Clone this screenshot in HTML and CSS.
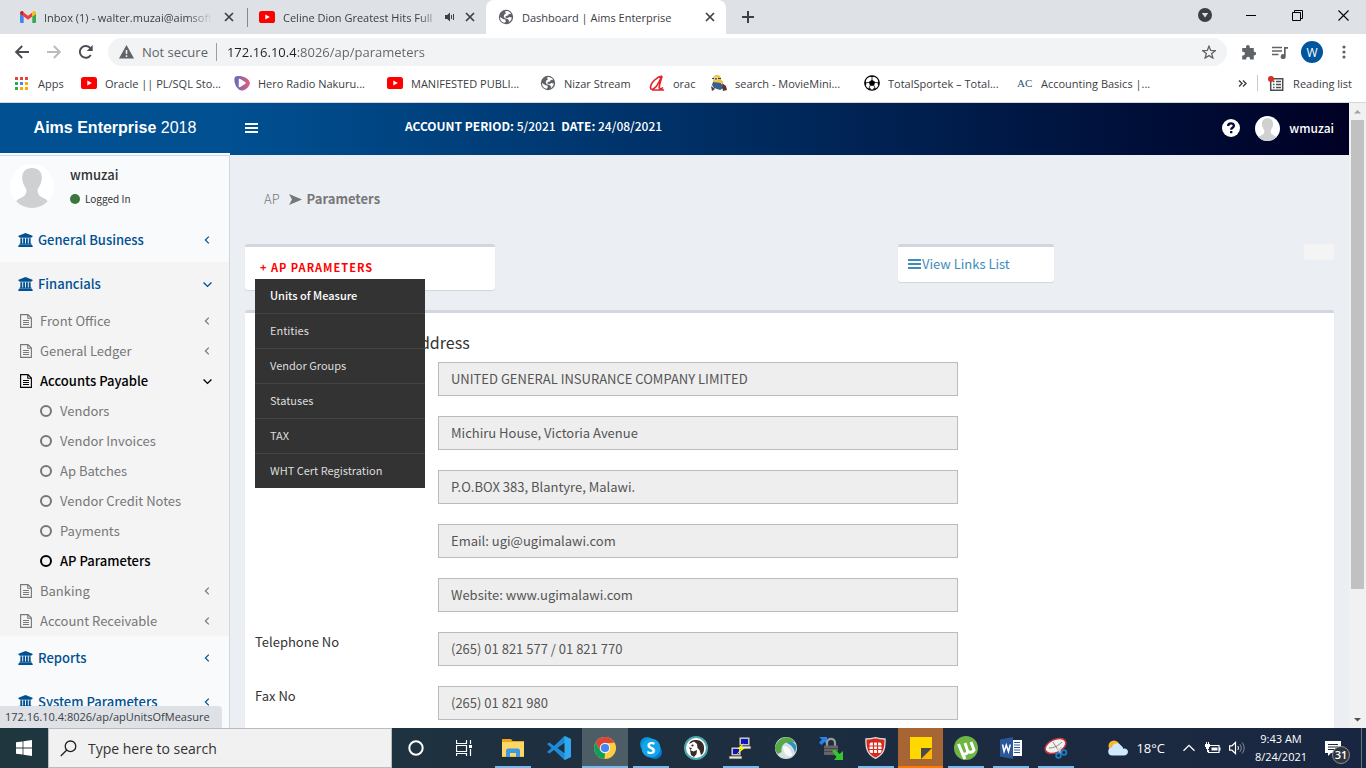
FILE: index.html
```html
<!DOCTYPE html>
<html lang="en">
<head>
    <meta charset="UTF-8">
    <meta name="viewport" content="width=device-width, initial-scale=1.0">
    <title>Dashboard | Aims Enterprise</title>
    <link rel="stylesheet" href="styles.css">
</head>
<body>
    <!-- shared icons -->
    <svg class="sprite" aria-hidden="true">
        <symbol id="i-close" viewBox="0 0 10 10"><path d="M1 1l8 8M9 1L1 9" stroke="#3c4043" stroke-width="1.7" fill="none"/></symbol>
        <symbol id="i-youtube" viewBox="0 0 16 12"><rect width="16" height="12" rx="2.6" fill="#f00"/><path d="M6.3 3.4v5.2L10.8 6z" fill="#fff"/></symbol>
        <symbol id="i-globe" viewBox="0 0 16 16"><circle cx="8" cy="8" r="7.2" fill="#5f6368"/><path d="M2 8l3.500 2.200 1.800.3.500 1.700-1 1.600C4 13.500 2 11.200 2 8zM7.500 2c2.300-.2 4.500.8 5.700 2.800l-2.400.2-.8 1.500-2.300.6-.2 1.700 2.500.3 1.200-1 2.600.5c-.2 2-1.300 3.700-3 4.600l.2-2-1.800-1.500-2.500-.4-1-2 .8-2 1.500-.8-.8-1.300z" fill="#fff"/></symbol>
        <symbol id="i-bank" viewBox="0 0 16 15"><path d="M8 0l7.500 3v1.200h-1V5h-13v-.8h-1V3zM2.500 5.600h2v5.600h1V5.600h2v5.600h1V5.600h2v5.600h1V5.600h2v5.600h.8v1H1.700v-1h.8zM1 12.600h14v.8h.700V15H.3v-1.600H1z" fill="currentColor"/></symbol>
        <symbol id="i-file" viewBox="0 0 12 14"><path d="M.6.6h7.400l3.400 3.400v9.400H.6zM7.800.6v3.600h3.600M3 6.500h6M3 8.500h6M3 10.500h6" fill="none" stroke="currentColor" stroke-width="1.100"/></symbol>
        <symbol id="i-left" viewBox="0 0 6 8"><path d="M4.800.6L1.400 4l3.400 3.400" fill="none" stroke="currentColor" stroke-width="1.200"/></symbol>
        <symbol id="i-down" viewBox="0 0 8 6"><path d="M.5 1.200L4 4.700l3.500-3.500" fill="none" stroke="currentColor" stroke-width="1.200"/></symbol>
        <symbol id="i-bars" viewBox="0 0 13 10"><path d="M0 1h13M0 5h13M0 9h13" stroke="currentColor" stroke-width="2"/></symbol>
        <symbol id="i-person" viewBox="0 0 44 44"><circle cx="22" cy="22" r="22" fill="#fff"/><path d="M22 4c-6 0-9.800 3.600-9.800 9.500 0 4 1.200 7.500 3.300 10.200.8 1 1 2 .9 3.400-.2 2.400-.8 4-3 5.400-3 1.700-5.400 2.400-7.200 4.700A22 22 0 0 0 22 44a22 22 0 0 0 15.800-6.800c-1.800-2.300-4.200-3-7.200-4.700-2.200-1.400-2.800-3-3-5.400-.1-1.400.1-2.400.9-3.400 2.100-2.700 3.300-6.200 3.300-10.200C31.800 7.600 28 4 22 4z" fill="#cfd0d2"/></symbol>
    </svg>

    <!-- browser tabs -->
    <div class="tab-strip">
        <div class="tab">
            <svg class="fav" viewBox="0 0 16 12"><path d="M1 12h2.700V5.500L0 2.700V11a1 1 0 0 0 1 1z" fill="#4285f4"/><path d="M12.300 12H15a1 1 0 0 0 1-1V2.700l-3.700 2.800z" fill="#34a853"/><path d="M3.700 1.400v4.100L8 8.700l4.300-3.200V1.400L8 4.700z" fill="#ea4335"/><path d="M12.300 1.400v4.100L16 2.700V2c0-1.700-1.900-2.600-3.200-1.600z" fill="#fbbc04"/><path d="M0 2.700l3.700 2.800V1.400L3.200.4C1.900-.6 0 .3 0 2z" fill="#c5221f"/></svg>
            <span class="tab-title">Inbox (1) - walter.muzai@aimsoft</span>
            <button class="tab-close" aria-label="Close tab"><svg width="10" height="10"><use href="#i-close"/></svg></button>
        </div>
        <div class="tab tab-split">
            <svg class="fav"><use href="#i-youtube"/></svg>
            <span class="tab-title">Celine Dion Greatest Hits Full</span>
            <svg width="11" height="10" viewBox="0 0 11 10"><path d="M0 3h2.200L5 .5v9L2.200 7H0z" fill="#3c4043"/><path d="M6.500 3v4M8.500 2v6" stroke="#3c4043"/></svg>
            <button class="tab-close" aria-label="Close tab"><svg width="10" height="10"><use href="#i-close"/></svg></button>
        </div>
        <div class="tab active">
            <svg class="fav"><use href="#i-globe"/></svg>
            <span class="tab-title">Dashboard | Aims Enterprise</span>
            <button class="tab-close" aria-label="Close tab"><svg width="10" height="10"><use href="#i-close"/></svg></button>
        </div>
        <button class="new-tab" aria-label="New tab"><svg width="12" height="12" viewBox="0 0 12 12"><path d="M6 0v12M0 6h12" stroke="#3c4043" stroke-width="2"/></svg></button>
        <div class="window-buttons">
            <button aria-label="Search tabs"><svg width="14" height="14" viewBox="0 0 14 14"><circle cx="7" cy="7" r="7" fill="#3c4043"/><path d="M3.800 5h6.400L7 9.500z" fill="#dee1e6"/></svg></button>
            <button aria-label="Minimize"><svg width="10" height="11"><path d="M0 5.500h10" stroke="#000"/></svg></button>
            <button aria-label="Restore"><svg width="11" height="11"><path d="M.5 2.500h8v8h-8zM2.500 2.500v-2h8v8h-2" fill="none" stroke="#000"/></svg></button>
            <button aria-label="Close"><svg width="11" height="11"><path d="M.5.5l10 10M10.500.5l-10 10" stroke="#000" stroke-width="1.100"/></svg></button>
        </div>
    </div>

    <div class="toolbar">
        <button aria-label="Back"><svg width="14" height="14" viewBox="0 0 14 14"><path d="M14 7H1.500M7.200 1L1.200 7l6 6" fill="none" stroke="#4a4d51" stroke-width="1.900"/></svg></button>
        <button aria-label="Forward"><svg width="14" height="14" viewBox="0 0 14 14"><path d="M0 7h12.500M6.800 1l6 6-6 6" fill="none" stroke="#b9bbbe" stroke-width="1.900"/></svg></button>
        <button aria-label="Reload"><svg width="14" height="14" viewBox="0 0 14 14"><path d="M11.800 10A5.900 5.900 0 1 1 11.400 3.200" fill="none" stroke="#4a4d51" stroke-width="1.900"/><path d="M13.700 0v6H7.700z" fill="#4a4d51"/></svg></button>
        <div class="omnibox">
            <svg width="15" height="14" viewBox="0 0 15 14"><path d="M7.500 0L15 13.500H0z" fill="#5f6368"/><path d="M7.500 5v4M7.500 10.300v1.600" stroke="#f1f3f4" stroke-width="1.600"/></svg>
            <span class="not-secure">Not secure</span>
            <input class="url" type="text" aria-label="Address" value="172.16.10.4:8026/ap/parameters">
            <button aria-label="Bookmark this page"><svg width="14" height="14" viewBox="0 0 14 14"><path d="M7 1.200l1.700 4.200 4.500.3-3.500 2.900 1.200 4.400L7 10.600 3.100 13l1.200-4.400L.8 5.700l4.500-.3z" fill="none" stroke="#5f6368" stroke-width="1.300"/></svg></button>
        </div>
        <div class="toolbar-right">
            <button aria-label="Extensions"><svg width="15" height="15" viewBox="0 0 15 15"><path d="M5 3V2a1.900 1.900 0 0 1 3.800 0v1h4v3.700h.4a1.900 1.900 0 0 1 0 3.800h-.4v4H9v-.8a1.900 1.900 0 0 0-3.800 0v.8H1.200v-4H2a1.900 1.900 0 0 0 0-3.800h-.8V3z" fill="#5f6368"/></svg></button>
            <button aria-label="Media"><svg width="16" height="13" viewBox="0 0 16 13"><path d="M0 1.500h10M0 5h10M0 8.500h6.500" stroke="#5f6368" stroke-width="1.700"/><path d="M12 1h4v1.800h-2.300V10.500a2.500 2.500 0 1 1-1.700-2.300z" fill="#5f6368"/></svg></button>
            <button class="profile">W</button>
            <button aria-label="Menu"><svg width="4" height="14" viewBox="0 0 4 14"><g fill="#5f6368"><circle cx="2" cy="2" r="1.600"/><circle cx="2" cy="7" r="1.600"/><circle cx="2" cy="12" r="1.600"/></g></svg></button>
        </div>
    </div>

    <nav class="bookmarks">
        <a class="bm-apps" href="#"><svg width="13" height="13" viewBox="0 0 13 13"><path d="M0 0h3v3H0zM5 0h3v3H5zM10 0h3v3h-3z" fill="#ea4335"/><path d="M0 5h3v3H0zM0 10h3v3H0z" fill="#34a853"/><path d="M5 5h3v3H5z" fill="#4285f4"/><path d="M10 5h3v3h-3zM10 10h3v3h-3zM5 10h3v3H5z" fill="#fbaa04"/></svg>Apps</a>
        <a class="bm-wide" href="#"><svg class="fav"><use href="#i-youtube"/></svg>Oracle || PL/SQL Sto...</a>
        <a class="bm-wide" href="#"><svg class="fav" viewBox="0 0 16 16"><defs><linearGradient id="hero"><stop offset="0" stop-color="#5b6fc0"/><stop offset="1" stop-color="#e85a7c"/></linearGradient></defs><path d="M1 2c3-2.500 14 0 15 6-1 5-6 8-9 7.500C2 14.500-1 5 1 2z" fill="url(#hero)"/><path d="M5.500 4.500v7l5.500-3.500z" fill="#fff" stroke="#fff" stroke-width="1.500" stroke-linejoin="round"/></svg>Hero Radio Nakuru...</a>
        <a class="bm-wide" href="#"><svg class="fav"><use href="#i-youtube"/></svg>MANIFESTED PUBLI...</a>
        <a class="bm-globe" href="#"><svg class="fav"><use href="#i-globe"/></svg>Nizar Stream</a>
        <a class="bm-orac" href="#"><svg class="fav" viewBox="0 0 16 16"><path d="M13 1C8 1.500 1.500 8 1.500 12.500c0 4 5.500 1 8.500-5.500L13 1l-2.500 9c-1 4 1 5 3.500 2.500M3 15h12" fill="none" stroke="#e3262d" stroke-width="1.700"/></svg>orac</a>
        <a class="bm-wide" href="#"><svg class="fav" viewBox="0 0 16 16"><rect x="2" y="0" width="8" height="10" rx="4" fill="#f0c23a"/><path d="M1 3.500h9" stroke="#444"/><circle cx="5" cy="3.800" r="2" fill="#ddd"/><circle cx="5" cy="3.800" r=".9" fill="#432"/><path d="M2 7l8 1 3 5-4 2-6-2-2-3z" fill="#36608e"/><path d="M0 11l4 3-3 2zM11 8l4 3 1 4-4 1z" fill="#5c352e"/><path d="M9 5l3 3" stroke="#f0c23a" stroke-width="2"/></svg>search - MovieMini...</a>
        <a class="bm-wide" href="#"><svg class="fav" viewBox="0 0 16 16"><circle cx="8" cy="8" r="7.200" fill="#fff" stroke="#000" stroke-width="1.200"/><path d="M8 4.700l3.200 2.400-1.200 3.700H6L4.800 7.100zM5 .9h6L8 2.600zM.8 6L2.600 7.400 1.900 10.500.8 10zM15.200 6l-1.800 1.400.7 3.100 1.100-.5zM3.500 13.400l2.800-.5.800 2.300zM12.500 13.400l-2.800-.5-.8 2.300z"/><path d="M8 2.500V5M2.500 7.500h2.400M13.500 7.500h-2.400M6 10.700l-1 2.500M10 10.700l1 2.500" stroke="#000" stroke-width=".8"/></svg>TotalSportek – Total...</a>
        <a class="bm-ac" href="#"><b>AC</b>Accounting Basics |...</a>
        <div class="reading">
            <button aria-label="More bookmarks"><svg width="9" height="7" viewBox="0 0 9 7"><path d="M1 .5l3 3-3 3M5 .5l3 3-3 3" fill="none" stroke="#3c4043" stroke-width="1.400"/></svg></button>
            <button class="reading-list"><svg width="16" height="15" viewBox="0 0 16 15"><path d="M2.700 2.700h12v11.500h-12z" fill="none" stroke="#4a4d51" stroke-width="1.500"/><path d="M5 5.500h1.500M5 8.500h1.500M5 11.500h1.500M8 5.500h5M8 8.500h5M8 11.500h5" stroke="#4a4d51" stroke-width="1.300"/><circle cx="3" cy="3" r="3" fill="#d93025"/></svg>Reading list</button>
        </div>
    </nav>

    <div class="viewport">
        <div class="page">
            <header class="main-header">
                <a class="brand" href="#"><b>Aims Enterprise</b> 2018</a>
                <button class="menu-toggle" aria-label="Toggle navigation"><svg width="13" height="10"><use href="#i-bars"/></svg></button>
                <div class="period"><b>ACCOUNT PERIOD:</b> <span>5/2021</span> <b>DATE:</b> <span>24/08/2021</span></div>
                <div class="header-user">
                    <a href="#" aria-label="Help"><svg width="18" height="18" viewBox="0 0 18 18"><circle cx="9" cy="9" r="9" fill="#fff"/><path d="M6.100 7c0-3.600 5.800-3.400 5.800-.2 0 2-2.700 2-2.700 3.900M9.200 12v2.300" fill="none" stroke="#000a31" stroke-width="2.300"/></svg></a>
                    <svg width="25" height="25"><use href="#i-person"/></svg>
                    <a href="#">wmuzai</a>
                </div>
            </header>

            <div class="wrapper">
                <aside class="sidebar">
                    <div class="user-panel">
                        <svg width="44" height="44"><use href="#i-person"/></svg>
                        <div>
                            <p class="user-name">wmuzai</p>
                            <p class="user-status"><i class="dot"></i>Logged In</p>
                        </div>
                    </div>
                    <a class="menu-top" href="#"><svg class="bank"><use href="#i-bank"/></svg>General Business<svg class="arrow"><use href="#i-left"/></svg></a>
                    <div class="submenu">
                        <a class="menu-top" href="#"><svg class="bank"><use href="#i-bank"/></svg>Financials<svg class="arrow open"><use href="#i-down"/></svg></a>
                        <a class="menu-item" href="#"><svg class="file"><use href="#i-file"/></svg>Front Office<svg class="arrow"><use href="#i-left"/></svg></a>
                        <a class="menu-item" href="#"><svg class="file"><use href="#i-file"/></svg>General Ledger<svg class="arrow"><use href="#i-left"/></svg></a>
                        <a class="menu-item current" href="#"><svg class="file"><use href="#i-file"/></svg>Accounts Payable<svg class="arrow open"><use href="#i-down"/></svg></a>
                        <a class="menu-item leaf" href="#"><i class="ring"></i>Vendors</a>
                        <a class="menu-item leaf" href="#"><i class="ring"></i>Vendor Invoices</a>
                        <a class="menu-item leaf" href="#"><i class="ring"></i>Ap Batches</a>
                        <a class="menu-item leaf" href="#"><i class="ring"></i>Vendor Credit Notes</a>
                        <a class="menu-item leaf" href="#"><i class="ring"></i>Payments</a>
                        <a class="menu-item leaf current" href="#"><i class="ring"></i>AP Parameters</a>
                        <a class="menu-item" href="#"><svg class="file"><use href="#i-file"/></svg>Banking<svg class="arrow"><use href="#i-left"/></svg></a>
                        <a class="menu-item" href="#"><svg class="file"><use href="#i-file"/></svg>Account Receivable<svg class="arrow"><use href="#i-left"/></svg></a>
                    </div>
                    <a class="menu-top" href="#"><svg class="bank"><use href="#i-bank"/></svg>Reports<svg class="arrow"><use href="#i-left"/></svg></a>
                    <a class="menu-top" href="#"><svg class="bank"><use href="#i-bank"/></svg>System Parameters<svg class="arrow"><use href="#i-left"/></svg></a>
                </aside>

                <main class="content">
                    <div class="breadcrumb">
                        <span>AP</span>
                        <svg width="13" height="11" viewBox="0 0 13 11"><path d="M0 0l13 5.500L0 11l3-5.500z" fill="#777"/></svg>
                        <b>Parameters</b>
                    </div>

                    <div class="box-row">
                        <div class="box params-box">
                            <a class="params-link" href="#">+ AP PARAMETERS</a>
                            <ul class="dropdown">
                                <li><a class="hover" href="#">Units of Measure</a></li>
                                <li><a href="#">Entities</a></li>
                                <li><a href="#">Vendor Groups</a></li>
                                <li><a href="#">Statuses</a></li>
                                <li><a href="#">TAX</a></li>
                                <li><a href="#">WHT Cert Registration</a></li>
                            </ul>
                        </div>
                        <div class="box links-box">
                            <a href="#"><svg width="13" height="10"><use href="#i-bars"/></svg>View Links List</a>
                        </div>
                        <button class="blank-btn" aria-label="Options"></button>
                    </div>

                    <form class="box form-box">
                        <h4>Company Name and Address</h4>
                        <div class="form-row"><label for="name"></label><input id="name" value="UNITED GENERAL INSURANCE COMPANY LIMITED" readonly></div>
                        <div class="form-row"><label for="addr1"></label><input id="addr1" value="Michiru House, Victoria Avenue" readonly></div>
                        <div class="form-row"><label for="addr2"></label><input id="addr2" value="P.O.BOX 383, Blantyre, Malawi." readonly></div>
                        <div class="form-row"><label for="addr3"></label><input id="addr3" value="Email: ugi@ugimalawi.com" readonly></div>
                        <div class="form-row"><label for="addr4"></label><input id="addr4" value="Website: www.ugimalawi.com" readonly></div>
                        <div class="form-row"><label for="tel">Telephone No</label><input id="tel" value="(265) 01 821 577 / 01 821 770" readonly></div>
                        <div class="form-row"><label for="fax">Fax No</label><input id="fax" value="(265) 01 821 980" readonly></div>
                    </form>
                </main>
            </div>
        </div>

        <div class="scrollbar">
            <svg width="17" height="17"><path d="M5 10.500h7L8.500 7z" fill="#a3a3a3"/></svg>
            <div class="thumb"></div>
            <svg width="17" height="17"><path d="M5 7h7l-3.500 3.500z" fill="#505050"/></svg>
        </div>
        <div class="status-bubble">172.16.10.4:8026/ap/apUnitsOfMeasure</div>
    </div>

    <footer class="taskbar">
        <button class="task-btn" aria-label="Start"><svg width="16" height="16" viewBox="0 0 16 16"><path d="M0 2.300L6.600 1.400v6.200H0zM7.400 1.300L16 0v7.600H7.400zM0 8.400h6.600v6.200L0 13.700zM7.400 8.400H16V16l-8.600-1.200z" fill="#fff"/></svg></button>
        <label class="search">
            <svg width="17" height="17" viewBox="0 0 17 17"><circle cx="10.500" cy="6.300" r="5.300" fill="none" stroke="#222" stroke-width="1.300"/><path d="M6.800 10L.8 16" stroke="#222" stroke-width="1.300"/></svg>
            <input type="text" placeholder="Type here to search" aria-label="Search">
        </label>
        <button class="task-btn" aria-label="Cortana"><svg width="16" height="16"><circle cx="8" cy="8" r="6.700" fill="none" stroke="#fff" stroke-width="2"/></svg></button>
        <button class="task-btn" aria-label="Task View"><svg width="17" height="16" viewBox="0 0 17 16"><path d="M.5 0v3.500h10V0M.5 5.500h10v6H.5zM.5 16v-2.500h10V16M14.500 0v4M14.500 9v7" fill="none" stroke="#fff" stroke-width="1.200"/><path d="M13 5h3v3h-3z" fill="#fff"/></svg></button>
        <div class="task-apps">
            <button class="app wide running" aria-label="File Explorer"><svg width="22" height="18" viewBox="0 0 22 18"><path d="M0 0h9l1.500 2H22v16H0z" fill="#e8a91c"/><path d="M0 3h22v14.500H0z" fill="#ffd765"/><path d="M4 18v-7l1.500-1.500h11L18 11v7h-4v-4H8v4z" fill="#3c9be4"/></svg></button>
            <button class="app wide" aria-label="Visual Studio Code"><svg width="24" height="24" viewBox="0 0 24 24"><path d="M17.500 0L7 10 2.500 6.500 0 8l4.500 4L0 16l2.500 1.500L7 14l10.500 10 6.500-3V3zM18 6.500v11L10.500 12z" fill="#1f8ad6" fill-rule="evenodd"/><path d="M17.500 0L24 3v18l-6.500 3z" fill="#2fa8f0"/></svg></button>
            <button class="app wide running focused" aria-label="Chrome"><svg width="22" height="22" viewBox="0 0 22 22"><circle cx="11" cy="11" r="11" fill="#ffcd40"/><path d="M1.500 5.500A11 11 0 0 1 20.500 5.500L11 6.500 6.500 13.500z" fill="#db4437"/><path d="M1.500 5.500l4.900 8.200L11 16l-.5 6A11 11 0 0 1 1.500 5.500z" fill="#0f9d58"/><circle cx="11" cy="11" r="5.200" fill="#f1f1f1"/><circle cx="11" cy="11" r="4.100" fill="#4285f4"/></svg></button>
            <button class="app running" aria-label="Skype"><svg width="22" height="22" viewBox="0 0 22 22"><circle cx="7" cy="7" r="7" fill="#0a8edb"/><circle cx="15" cy="15" r="7" fill="#0078d4"/><circle cx="11" cy="11" r="9.500" fill="#13a5e8"/><text class="skype-s" x="11" y="17" text-anchor="middle">S</text></svg></button>
            <button class="app" aria-label="DBeaver"><svg width="24" height="24" viewBox="0 0 24 24"><circle cx="12" cy="12" r="11" fill="#fff" stroke="#4ba9ad" stroke-width="2"/><path d="M5 8c1-3 4-4.500 7-4 4-.5 8 3 8 7 .5 4-1 7-3 8l-1.500-5-2-2-.5-4-3-2.500z" fill="#382b27"/><path d="M6 14l3.500 1.500L13 14l-.5 4-2.500 3-3-2z" fill="#382b27"/><circle cx="8.500" cy="9.500" r="1.100" fill="#222"/><path d="M5 11.500l3 .5-1.500 2z" fill="#222"/></svg></button>
            <button class="app running" aria-label="PuTTY"><svg width="23" height="23" viewBox="0 0 23 23"><path d="M10 0h11v9H10zM2 10h10v9H2z" fill="#c4c4bc" stroke="#222" stroke-width=".8"/><path d="M12 2h7v5h-7zM4 12h6v5H4z" fill="#0a12cc"/><path d="M10 9h12v3H11zM0 19h13v3H0z" fill="#e5e5df" stroke="#333" stroke-width=".7"/><path d="M15 6l-7 6h4l-5 6 9-7h-4z" fill="#ff0"/></svg></button>
            <button class="app" aria-label="AnyConnect"><svg width="22" height="22" viewBox="0 0 22 22"><circle cx="11" cy="11" r="11" fill="#d5e0e4"/><path d="M0 11C1 4 8-1 14 .5c3 1 5 3 6 5l-7-.5C8 6 6 10 6.500 15L3 17C1 15 0 13 0 11z" fill="#58a946"/><path d="M11 5.500c5-2 9.500 0 10.500 4.500l-1.500 6c-1-5-3.500-8-9-10.500z" fill="#2d93bd"/><path d="M8 9c5 0 9 4 9 10-5 1.500-9-3-9-10z" fill="#f7f9fa"/></svg></button>
            <button class="app" aria-label="WinSCP"><svg width="24" height="23" viewBox="0 0 24 23"><path d="M0 0h8v7L5.500 5 2.500 8 0 5.500l3-3z" fill="#2483ed"/><path d="M8 9V6c0-5.500 8-5.500 8 0v3" fill="none" stroke="#9a9a9a" stroke-width="2.200"/><rect x="5" y="8.500" width="14" height="9.500" rx="1" fill="#666"/><path d="M5 11.500h14M5 14.500h14" stroke="#484848"/><path d="M13 14l3-1.500 4.500 4.500L24 14v9h-9l2.500-3z" fill="#35c52f"/></svg></button>
            <button class="app running" aria-label="FortiClient"><svg width="21" height="22" viewBox="0 0 21 22"><path d="M1 2c3 0 6-.3 9.500-1.300C14 1.700 17 2 20 2c.5 9-1 15-9.500 19.300C2 17 .5 11 1 2z" fill="#d9281c" stroke="#ddd" stroke-width="1.300"/><rect x="4.500" y="5.500" width="12" height="10.500" rx="2" fill="#fff"/><path d="M4 9h13M4 12.500h13M8.500 5v11.500M12.500 5v11.500" stroke="#d9281c" stroke-width="1.200"/></svg></button>
            <button class="app running alert" aria-label="Sticky Notes"><svg width="22" height="22" viewBox="0 0 22 22"><path d="M0 0h22v11L11 22H0z" fill="#ffd800"/><path d="M11 22h11V11z" fill="#ffb900"/><path d="M11 22V11h11z" fill="#4b4b45"/></svg></button>
            <button class="app running" aria-label="uTorrent"><svg width="24" height="24" viewBox="0 0 24 24"><circle cx="12" cy="12" r="12" fill="#6fb544"/><path d="M4.500 8l3.500 8.500c2 3 6 1.500 5.500-2L11 7M13.500 14.500c1.500 2.500 5 2.500 6.500-.5L17 6M8 17l3 6" fill="none" stroke="#fff" stroke-width="3"/></svg></button>
            <button class="app running" aria-label="Word"><svg width="22" height="22" viewBox="0 0 22 22"><path d="M12 3h10v16H12z" fill="#fff"/><path d="M14 5.500h6M14 8h6M14 10.500h6M14 13h6M14 15.500h6" stroke="#2b579a"/><path d="M0 2.500L13 0v22L0 19.500z" fill="#2b579a"/><path d="M2.500 7.500l1.600 7 2.200-6.500 2.200 6.500 1.800-7" fill="none" stroke="#fff" stroke-width="1.500"/></svg></button>
            <button class="app running" aria-label="Snipping Tool"><svg width="24" height="22" viewBox="0 0 24 22"><ellipse cx="11.500" cy="9" rx="11" ry="6.500" transform="rotate(-25 11.500 9)" fill="#f2f2f2" stroke="#c8353c" stroke-width="1.500"/><path d="M5 11c5 0 9-2 13-6M9 5l5 8" stroke="#888" fill="none"/><path d="M13 11l4 5M17 10l-2 6" stroke="#ccc" stroke-width="1.500"/><circle cx="14.500" cy="18.500" r="2.400" fill="none" stroke="#1b7fc4" stroke-width="1.700"/><circle cx="20" cy="15.500" r="2.400" fill="none" stroke="#1b7fc4" stroke-width="1.700"/></svg></button>
        </div>
        <div class="tray">
            <svg width="20" height="16" viewBox="0 0 20 16"><circle cx="6" cy="6" r="5.500" fill="#fcb52f"/><path d="M4.500 15.500a4 4 0 0 1-.5-8A5 5 0 0 1 13 5.500c1.300.7 2 2 2.200 3.200 3.500-.7 5.300 1.800 4.600 4-.5 1.800-2 2.800-3.800 2.800z" fill="#cfe9fb"/></svg>
            <span class="temp">18°C</span>
            <svg class="tray-up" width="12" height="8" viewBox="0 0 12 8"><path d="M.5 6.800L6 1.300l5.500 5.500" fill="none" stroke="#fff" stroke-width="1.300"/></svg>
            <svg width="16" height="12" viewBox="0 0 16 12"><path d="M4.500 3.500h9.500v7H3.500V8" fill="none" stroke="#fff" stroke-width="1.200"/><path d="M14 5.500h1.500v3H14zM6.500 5.500h6v3h-6zM0 2h5v3H4v2H1V5H0zM1 0h1v2H1zM3 0h1v2H3zM2 7h1v3H2z" fill="#fff"/></svg>
            <svg width="16" height="14" viewBox="0 0 16 14"><path d="M.6 4.800H3L6.500 1.500v11L3 9.200H.6z" fill="none" stroke="#fff" stroke-width="1.200"/><path d="M8.800 5c.8 1.200.8 2.800 0 4" fill="none" stroke="#fff"/><path d="M10.800 3.200c2 2.200 2 5.400 0 7.600M13 1.500c2.800 3.200 2.800 7.800 0 11" fill="none" stroke="#8490a0"/></svg>
            <div class="clock"><time>9:43 AM</time><time>8/24/2021</time></div>
            <button class="notify" aria-label="Notifications"><svg width="16" height="15" viewBox="0 0 16 15"><path d="M0 0h16v12H6l-3 3v-3H0z" fill="#fff"/><path d="M3 3.500h10M3 6h10M3 8.500h7" stroke="#1a2840" stroke-width="1.100"/></svg><span class="badge">31</span></button>
        </div>
    </footer>
</body>
</html>
```
FILE: styles.css
```css
* {
    box-sizing: border-box;
}
body {
    margin: 0;
    height: 100vh;
    display: flex;
    flex-direction: column;
    overflow: hidden;
    font-family: "Open Sans", "Noto Sans", sans-serif;
    font-size: 11px;
    color: #3c4043;
    background-color: #fff;
}
a {
    color: inherit;
    text-decoration: none;
}
button {
    border: none;
    padding: 0;
    background: none;
    font: inherit;
    color: inherit;
    display: flex;
    align-items: center;
    justify-content: center;
}
p, h4, ul {
    margin: 0;
    padding: 0;
}
input {
    font: inherit;
    min-width: 0;
}
svg {
    flex: none;
    display: block;
}
.sprite {
    position: absolute;
    width: 0;
    height: 0;
}
.fav {
    width: 16px;
    height: 16px;
}

/* Tabs */
.tab-strip {
    display: flex;
    flex: none;
    height: 34px;
    padding-left: 4px;
    background-color: #dee1e6;
}
.tab {
    display: flex;
    align-items: center;
    width: 241px;
    padding: 0 8px 0 16px;
}
.tab-split {
    border-left: 1px solid transparent;
    background: linear-gradient(#85888d, #85888d) no-repeat 1px 8px / 1px 19px;
    padding-left: 13px;
}
.tab-title {
    flex: 1;
    margin: 0 3px 0 8px;
    overflow: hidden;
    white-space: nowrap;
    -webkit-mask-image: linear-gradient(to right, #000 85%, transparent);
    mask-image: linear-gradient(to right, #000 85%, transparent);
}
.tab.active {
    width: 240px;
    padding-left: 12px;
    background-color: #fff;
    border-radius: 8px 8px 0 0;
}
.tab.active .tab-title {
    -webkit-mask-image: none;
    mask-image: none;
}
.tab-close {
    width: 16px;
    height: 16px;
    margin-left: 6px;
}
.new-tab {
    width: 44px;
}
.window-buttons {
    display: flex;
    margin-left: auto;
}
.window-buttons button {
    width: 46px;
    height: 30px;
}

/* Toolbar */
.toolbar {
    display: flex;
    align-items: center;
    flex: none;
    height: 36px;
    padding: 0 16px 0 6px;
}
.toolbar > button {
    width: 32px;
    height: 28px;
}
.omnibox {
    flex: 1;
    display: flex;
    align-items: center;
    height: 28px;
    margin-left: 6px;
    padding: 0 11px;
    border-radius: 14px;
    background-color: #f1f3f4;
    font-size: 13px;
}
.not-secure {
    margin: 0 8px;
    color: #5f6368;
}
.url {
    flex: 1;
    height: 18px;
    padding: 0 0 0 10px;
    border: none;
    border-left: 1px solid #9a9da1;
    outline: none;
    /* host part dark, path grey */
    background: linear-gradient(to right, #202124 79px, #5f6368 79px);
    -webkit-background-clip: text;
    background-clip: text;
    color: transparent;
}
.toolbar-right {
    display: flex;
    align-items: center;
    margin-left: 14px;
    gap: 16px;
}
.toolbar-right button:last-child {
    width: 12px;
    margin-left: -1px;
}
.toolbar-right .profile {
    width: 22px;
    height: 22px;
    margin-left: -3px;
    border-radius: 50%;
    background-color: #00569d;
    color: #fff;
    font-size: 12px;
}

/* Bookmarks */
.bookmarks {
    display: flex;
    align-items: center;
    flex: none;
    height: 33px;
    padding: 0 14px 6px 15px;
    border-bottom: 1px solid #d5d7da;
    white-space: nowrap;
}
.bookmarks a {
    display: flex;
    align-items: center;
    gap: 8px;
}
.bookmarks .bm-apps {
    width: 66px;
    gap: 10px;
}
.bm-wide {
    width: 153px;
}
.bm-globe {
    width: 109px;
}
.bm-orac {
    width: 62px;
}
.bm-ac b {
    width: 16px;
    font: 11px "Liberation Serif", serif;
    color: #1f5676;
}
.reading {
    display: flex;
    align-items: center;
    margin-left: auto;
    gap: 10px;
}
.reading-list {
    height: 16px;
    gap: 9px;
    padding-left: 10px;
    border-left: 1px solid #c8cacd;
}

/* Page */
.viewport {
    flex: 1;
    display: flex;
    min-height: 0;
    position: relative;
    overflow: hidden;
}
.page {
    flex: 1;
    display: flex;
    flex-direction: column;
    min-width: 0;
    font-family: "Noto Sans CJK SC", "Noto Sans", sans-serif;
    font-size: 13px;
    line-height: 20px;
    color: #333;
}
.main-header {
    display: flex;
    flex: none;
    height: 52px;
    background: linear-gradient(to right, #005092 230px, #000024);
    color: #fff;
}
.brand {
    width: 230px;
    padding-top: 15px;
    border-bottom: 2px solid #f9fafc;
    text-align: center;
    font-family: "Liberation Sans", Arial, sans-serif;
    font-size: 16px;
}
.menu-toggle {
    width: 42px;
    height: 50px;
}
.period {
    margin: 13px 0 0 133px;
    font-size: 12px;
    font-weight: 500;
}
.period span {
    margin-right: 3px;
}
.header-user {
    display: flex;
    align-items: center;
    gap: 15px;
    height: 50px;
    margin-left: auto;
    padding-right: 15px;
    font-size: 12px;
    font-weight: 500;
}
.header-user a:last-child {
    margin-left: -6px;
}
.wrapper {
    flex: 1;
    display: flex;
    min-height: 0;
}

/* Sidebar */
.sidebar {
    flex: none;
    width: 230px;
    border-right: 1px solid #d2d6de;
    border-top: 1px solid #d2d6de;
    background-color: #f9fafc;
    overflow: hidden;
}
.user-panel {
    display: flex;
    gap: 16px;
    height: 62px;
    padding: 8px 10px;
}
.user-name {
    font-weight: 500;
}
.user-panel > div {
    padding-top: 1px;
}
.user-status {
    display: flex;
    align-items: center;
    gap: 5px;
    padding-top: 4px;
    font-size: 10px;
}
.dot {
    width: 10px;
    height: 10px;
    border-radius: 50%;
    background-color: #3c763d;
}
.menu-top,
.menu-item {
    display: flex;
    align-items: center;
    padding: 0 17px 0 18px;
}
.menu-top {
    height: 44px;
    gap: 5px;
    color: #005092;
    font-weight: 500;
}
.menu-item {
    height: 30px;
    gap: 8px;
    padding-left: 20px;
    color: #777;
}
.leaf {
    padding-left: 40px;
}
.current {
    color: #000;
    font-weight: 500;
}
.submenu {
    background-color: #f4f4f5;
}
.bank {
    width: 15px;
    height: 14px;
}
.file {
    width: 12px;
    height: 14px;
}
.arrow {
    width: 6px;
    height: 8px;
    margin-left: auto;
    margin-right: 2px;
}
.arrow.open {
    width: 9px;
    height: 7px;
    margin-right: 0;
}
.ring {
    width: 12px;
    height: 12px;
    border: 2px solid;
    border-radius: 50%;
}

/* Content */
.content {
    flex: 1;
    min-width: 0;
    padding: 34px 15px 0;
    background-color: #ebeef3;
}
.breadcrumb {
    display: flex;
    align-items: center;
    gap: 5px;
    padding-left: 19px;
    color: #777;
}
.breadcrumb span {
    margin-right: 4px;
    font-weight: 300;
}
.box-row {
    display: flex;
    align-items: flex-start;
    justify-content: space-between;
    height: 66px;
    margin-top: 35px;
}
.box {
    background-color: #fff;
    border-top: 3px solid #d2d6de;
    border-radius: 3px;
    box-shadow: 0 1px 1px rgba(0, 0, 0, 0.1);
}
.params-box {
    position: relative;
    width: 250px;
    height: 46px;
    padding: 10px 15px;
}
.params-link {
    display: block;
    color: #f00;
    font-size: 11px;
    font-weight: 700;
    letter-spacing: 1px;
}
.dropdown {
    position: absolute;
    top: 32px;
    left: 10px;
    z-index: 2;
    width: 170px;
    background-color: #333;
    list-style: none;
    font-size: 11px;
    line-height: 32px;
    color: #ddd;
}
.dropdown li {
    padding: 0 0 2px 15px;
}
.dropdown li + li {
    border-top: 1px solid #444;
}
.dropdown .hover {
    color: #fff;
    font-weight: 500;
}
.links-box {
    width: 156px;
    height: 38px;
    margin-left: 153px;
    padding: 7px 10px;
    color: #3c8dbc;
}
.links-box a {
    display: flex;
    align-items: center;
    gap: 1px;
}
.blank-btn {
    width: 30px;
    height: 16px;
    border-radius: 3px;
    background-color: #f4f4f4;
}
.form-box {
    padding: 19px 10px;
    height: 600px;
}
.form-box h4 {
    margin-bottom: 10px;
    font-size: 16px;
    font-weight: 400;
}
.form-row {
    display: grid;
    grid-template-columns: 183px minmax(0, 520px);
    margin-bottom: 20px;
}
.form-row input {
    height: 34px;
    padding: 0 12px 2px;
    border: 1px solid #bbb;
    border-radius: 0;
    background-color: #eee;
    color: #555;
}

.scrollbar {
    flex: none;
    display: flex;
    flex-direction: column;
    width: 17px;
    background-color: #f1f1f1;
}
.thumb {
    height: 75%;
    margin: 0 2px auto;
    background-color: #c1c1c1;
}
.status-bubble {
    position: absolute;
    left: 0;
    bottom: 0;
    z-index: 3;
    height: 22px;
    padding: 0 12px 0 5px;
    border-top-right-radius: 4px;
    background-color: #dee1e6;
    line-height: 22px;
}

/* Taskbar */
.taskbar {
    display: flex;
    flex: none;
    height: 40px;
    background: linear-gradient(to right, #20363f, #1d2d40 60%, #192641);
    color: #fff;
}
.task-btn {
    width: 48px;
}
.search {
    display: flex;
    align-items: center;
    gap: 9px;
    width: 344px;
    padding-left: 11px;
    border: 1px solid #b9bcbd;
    background-color: #f1f1f1;
}
.search input {
    flex: 1;
    border: none;
    outline: none;
    background: none;
    font-size: 14px;
}
.search input::placeholder {
    color: #333;
}
.task-apps {
    display: flex;
    margin-left: 2px;
}
.app {
    width: 45px;
    background: no-repeat center bottom / 36px 2px;
}
.app.wide {
    width: 46px;
}
.running {
    background-image: linear-gradient(#76b9ed, #76b9ed);
}
.focused {
    background-color: #4c5d66;
    background-size: 100% 2px;
}
.alert {
    background-color: #a66532;
    background-image: linear-gradient(#ff7800, #ff7800);
    background-size: 100% 2px;
}
.skype-s {
    font: bold 16px "Open Sans", sans-serif;
    fill: #fff;
}
.tray {
    display: flex;
    align-items: center;
    gap: 8px;
    margin-left: auto;
    margin-right: 4px;
    padding-right: 4px;
    border-right: 1px solid #66707f;
}
.temp {
    font-size: 13px;
}
.tray-up {
    margin: 0 2px 0 10px;
}
.clock {
    display: flex;
    flex-direction: column;
    width: 56px;
    text-align: center;
    line-height: 18px;
}
.notify {
    position: relative;
    width: 48px;
    height: 40px;
    margin-left: -8px;
}
.badge {
    position: absolute;
    right: 7px;
    bottom: 4px;
    width: 18px;
    height: 18px;
    border: 1px solid #8b929c;
    border-radius: 50%;
    background-color: #30343c;
    font-size: 11px;
    font-weight: 600;
    line-height: 16px;
    text-align: center;
}
```
